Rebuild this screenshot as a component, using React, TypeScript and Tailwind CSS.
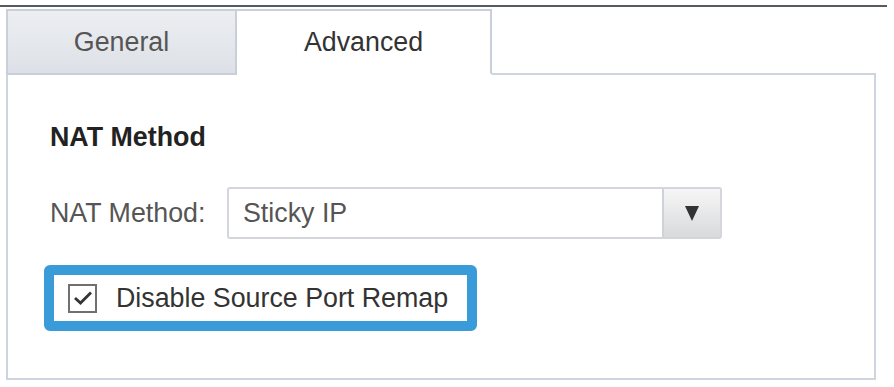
export default function App() {
  return (
    <div className="w-[894px] h-[387px] bg-white overflow-hidden font-['Liberation_Sans',Arial,sans-serif] text-[26.8px] leading-[30px]">
      <div className="mt-[5px] h-[2px] w-[887px] bg-[#555a5f]" />
      <div className="mt-[2px] ml-[6px] flex h-[66px] -mb-[2px] relative z-10">
        <div className="w-[231px] flex items-center justify-center border-2 border-[#c9cfd8] bg-gradient-to-b from-[#eceef1] to-[#dde1e7] text-[#555]">
          General
        </div>
        <div className="w-[255px] flex items-center justify-center border-t-2 border-r-2 border-b-2 border-[#c9cfd8] border-b-white bg-white text-[#333]">
          Advanced
        </div>
      </div>
      <div className="ml-[6px] w-[870px] h-[307px] border-2 border-[#cfd5de] pl-[42px] pt-[47px]">
        <div className="font-bold text-[#222]">NAT Method</div>
        <div className="mt-[35px] flex items-center">
          <span className="w-[177px] text-[#555]">NAT Method:</span>
          <div className="w-[495px] h-[52px] flex items-stretch border-2 border-[#d3d6db] rounded-[3px]">
            <div className="flex-1 flex items-center pl-[14px] text-[#555]">Sticky IP</div>
            <div className="w-[58px] flex items-center justify-center border-l-2 border-[#cfd2d6] bg-gradient-to-b from-[#f6f6f6] to-[#d9dadc]">
              <svg width="14" height="15" viewBox="0 0 14 15">
                <path d="M0 0 H14 L7 15 Z" fill="#333" />
              </svg>
            </div>
          </div>
        </div>
        <div className="mt-[26px] -ml-[6px] w-[433px] h-[66px] border-[10px] border-[#3a9bd9] rounded-[6px] flex items-center pl-[14px]">
          <div className="w-[29px] h-[29px] border-[2.5px] border-[#707070] bg-white flex items-center justify-center">
            <svg width="20" height="16" viewBox="0 0 20 16">
              <path d="M2 8 L7.5 13 L18 2.5" stroke="#333" strokeWidth="2.8" fill="none" />
            </svg>
          </div>
          <span className="ml-[19px] text-[#333]">Disable Source Port Remap</span>
        </div>
      </div>
    </div>
  );
}
